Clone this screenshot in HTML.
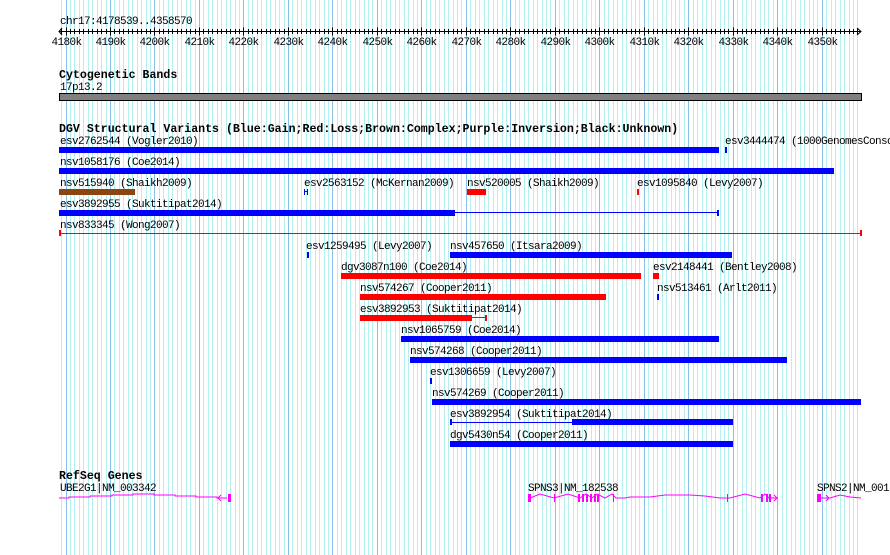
<!DOCTYPE html>
<html><head><meta charset="utf-8"><style>
html,body{margin:0;padding:0;background:#fff;}
svg{display:block;}
text{font-family:"Liberation Mono",monospace;font-size:11px;letter-spacing:-0.6px;fill:#000;}
.b{font-weight:bold;font-size:11.6px;letter-spacing:0;}
</style></head><body>
<svg id="s" width="890" height="555" xmlns="http://www.w3.org/2000/svg">
<g id="grid"></g>
<g id="ruler"></g>
<text x="60" y="24">chr17:4178539..4358570</text>
<text class="b" x="59" y="78">Cytogenetic Bands</text>
<text x="60" y="90">17p13.2</text>
<rect x="59.5" y="93.5" width="802" height="7" fill="#808080" stroke="#000" stroke-width="1"/>
<text class="b" x="59" y="132">DGV Structural Variants (Blue:Gain;Red:Loss;Brown:Complex;Purple:Inversion;Black:Unknown)</text>
<g id="feat"></g>
<text class="b" x="59" y="479">RefSeq Genes</text>
<text x="60" y="491">UBE2G1|NM_003342</text>
<text x="528" y="491">SPNS3|NM_182538</text>
<text x="817" y="491">SPNS2|NM_001</text>
<g fill="none" stroke="#f0f" stroke-width="1">
<polyline points="59,498 69,498 69,497 90,497 90,496 112,496 112,495 133,495 133,494 154,494 154,495 175,495 175,496 196,496 196,497 217,497 217,498 227,498"/>
<polyline points="221,495 218,498 221,501"/>
<polyline points="530,498 540,494 554,498 568,494 580,498 586,494 592,498 597,494 605,498 612,494 616,498 625,498 630,497 650,497 665,495 690,495 705,496 720,498 730,498 745,494 760,498 765,494 769,498 778,498"/>
<polyline points="774,495 777,498 774,501"/>
<polyline points="820,498 830,498 840,495 850,497 861,498"/>
<polyline points="826,495 829,498 826,501"/>
</g>
<g fill="#f0f">
<rect x="228" y="494" width="3" height="8"/>
<rect x="528" y="494" width="3" height="8"/><rect x="554" y="494" width="1" height="8"/>
<rect x="578" y="494" width="2" height="8"/><rect x="582" y="494" width="2" height="8"/><rect x="586" y="494" width="2" height="8"/><rect x="590" y="494" width="2" height="8"/><rect x="594" y="494" width="2" height="8"/><rect x="597" y="494" width="2" height="8"/>
<rect x="613" y="494" width="1" height="8"/><rect x="727" y="494" width="1" height="8"/>
<rect x="761" y="494" width="2" height="8"/><rect x="766" y="494" width="2" height="8"/><rect x="769" y="494" width="2" height="8"/>
<rect x="817" y="494" width="4" height="8"/>
</g>
</svg>
<script>
var NS="http://www.w3.org/2000/svg";
function px(bp){return 59+(bp-4178539)/180031*801;}
function el(p,t,a){var e=document.createElementNS(NS,t);for(var k in a)e.setAttribute(k,a[k]);p.appendChild(e);return e;}
var g=document.getElementById('grid');
for(var k=4179;k<=4358;k++){var x=Math.round(px(k*1000))+0.5;el(g,'line',{x1:x,x2:x,y1:0,y2:555,stroke:(k%10==0)?'#88c0e8':'#b4f0f0','stroke-width':1});}
var r=document.getElementById('ruler');
el(r,'line',{x1:59,x2:861,y1:31.5,y2:31.5,stroke:'#000'});
el(r,'polyline',{points:'62,28 59,31.5 62,35',fill:'none',stroke:'#000'});
el(r,'polyline',{points:'857,28 861,31.5 857,35',fill:'none',stroke:'#000'});
for(var k=4179;k<=4358;k++){var x=Math.round(px(k*1000))+0.5;var h=(k%10==0)?4:2.5;el(r,'line',{x1:x,x2:x,y1:31.5-h,y2:31.5+h,stroke:'#000'});
if(k%10==0&&k<=4350){var t=el(r,'text',{x:x,y:45,'text-anchor':'middle'});t.textContent=k+'k';}}
var f=document.getElementById('feat');
var B='#0000ff',R='#ff0000',N='#8b4513';
function lab(x,y,s){var t=el(f,'text',{x:x,y:y});t.textContent=s;}
function bar(x1,x2,y,c){el(f,'rect',{x:x1,y:y,width:x2-x1,height:6,fill:c});}
function thin(x1,x2,y,c){el(f,'rect',{x:x1,y:y,width:x2-x1,height:1,fill:c});}
lab(60,144,'esv2762544 (Vogler2010)');bar(59,719,147,B);
lab(725,144,'esv3444474 (1000GenomesConsortium)');bar(725,727,147,B);
lab(60,165,'nsv1058176 (Coe2014)');bar(59,834,168,B);
lab(60,186,'nsv515940 (Shaikh2009)');bar(59,135,189,N);
lab(304,186,'esv2563152 (McKernan2009)');bar(304,305,189,B);bar(307,308,189,B);thin(304,308,191,B);
lab(467,186,'nsv520005 (Shaikh2009)');bar(467,486,189,R);
lab(637,186,'esv1095840 (Levy2007)');bar(637,639,189,R);
lab(60,207,'esv3892955 (Suktitipat2014)');bar(59,455,210,B);thin(455,718,212,B);bar(717,719,210,B);
lab(60,228,'nsv833345 (Wong2007)');thin(59,861,233,R);bar(59,61,230,R);bar(860,862,230,R);
lab(306,249,'esv1259495 (Levy2007)');bar(307,309,252,B);
lab(450,249,'nsv457650 (Itsara2009)');bar(450,732,252,B);
lab(341,270,'dgv3087n100 (Coe2014)');bar(341,641,273,R);
lab(653,270,'esv2148441 (Bentley2008)');bar(653,659,273,R);
lab(360,291,'nsv574267 (Cooper2011)');bar(360,606,294,R);
lab(657,291,'nsv513461 (Arlt2011)');bar(657,659,294,B);
lab(360,312,'esv3892953 (Suktitipat2014)');bar(360,472,315,R);thin(472,486,317,R);bar(485,487,315,R);
lab(401,333,'nsv1065759 (Coe2014)');bar(401,719,336,B);
lab(410,354,'nsv574268 (Cooper2011)');bar(410,787,357,B);
lab(430,375,'esv1306659 (Levy2007)');bar(430,432,378,B);
lab(432,396,'nsv574269 (Cooper2011)');bar(432,861,399,B);
lab(450,417,'esv3892954 (Suktitipat2014)');thin(450,572,422,B);bar(450,452,419,B);bar(572,733,419,B);
lab(450,438,'dgv5430n54 (Cooper2011)');bar(450,733,441,B);
</script>
</body></html>
